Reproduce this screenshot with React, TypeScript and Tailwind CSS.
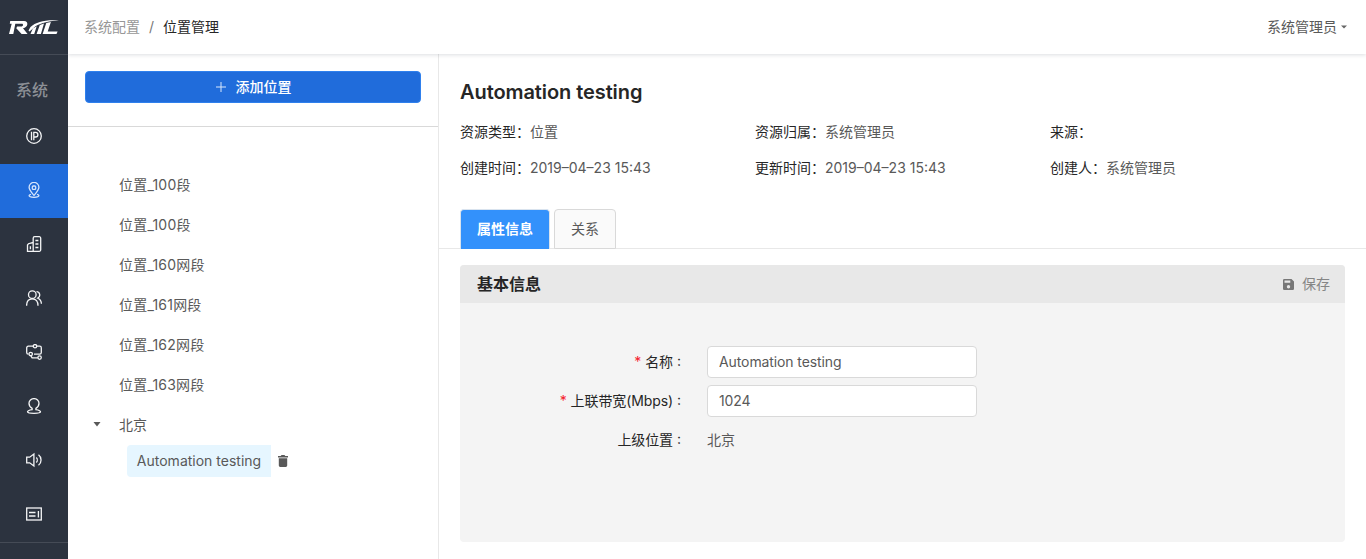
import React from "react";

const navIcons: { id: string; art: React.ReactNode }[] = [
  {
    id: "ip",
    art: (
      <>
        <circle cx="8" cy="8" r="7.3" />
        <path d="M5.500 3.800v8.400M7.800 12.200V4.400h1.800a2.300 2.300 0 0 1 0 4.600H7.800" />
      </>
    ),
  },
  {
    id: "location",
    art: (
      <>
        <path d="M8 13.400C5.600 10.600 3.100 8 3.100 5.300a4.900 4.900 0 0 1 9.800 0C12.900 8 10.400 10.600 8 13.400z" />
        <rect x="6.300" y="4" width="3.400" height="3.400" rx="1" />
        <path d="M5 12.300c-1 .2-1.900.6-1.900 1.300 0 1.300 2.200 1.700 4.900 1.700s4.900-.4 4.900-1.700c0-.7-.9-1.100-1.900-1.300" />
      </>
    ),
  },
  {
    id: "building",
    art: (
      <>
        <path d="M7.200 15.300V2.200A1.500 1.500 0 0 1 8.700.7h4.500a1.500 1.500 0 0 1 1.500 1.500v11.600a1.500 1.500 0 0 1-1.500 1.500H1.500V9l1-1.300 4.700-1.200" />
        <path d="M4.400 10.300v3M9.400 4.500h3M9.400 8h3M9.400 11.500h3" />
      </>
    ),
  },
  {
    id: "group",
    art: (
      <>
        <circle cx="6.300" cy="4.700" r="3.800" />
        <path d="M.6 15.800c0-4.400 2.300-7 5.700-7s5.700 2.600 5.700 7M10.500 1.600c3.600.2 4.400 4.800 1.300 6.500 2.200 1 3.500 3 3.600 5.600" />
      </>
    ),
  },
  {
    id: "topology",
    art: (
      <>
        <path d="M7.200 2.200H2.300A1.600 1.600 0 0 0 .7 3.800v4.800a1.600 1.600 0 0 0 1.600 1.600M10.800 2.200h2.900a1.600 1.600 0 0 1 1.600 1.600v4.800a1.600 1.600 0 0 1-1.600 1.600H8M4.800 11.600l1.300 2.200h5.700" />
        <circle cx="9" cy="2.200" r="1.700" />
        <circle cx="4.700" cy="10" r="1.700" />
        <circle cx="13.600" cy="13.600" r="1.700" />
      </>
    ),
  },
  {
    id: "user",
    art: (
      <path d="M6.100 10.400C4.200 9.200 3 7.200 3 5.200a5 4.600 0 0 1 10 0c0 2-1.200 4-3.100 5.200v1.200c2.800.5 4.600 1.100 4.600 2.200 0 1-1.700 1.500-6.500 1.500s-6.500-.5-6.500-1.500c0-1.100 1.800-1.700 4.600-2.200z" />
    ),
  },
  {
    id: "sound",
    art: (
      <path d="M.7 5.200h3L7.900 2v12l-4.200-3.200h-3zM10.300 5.500c1.300 1.300 1.300 3.700 0 5M12.500 2.700c3.400 2.500 3.400 8.100 0 10.600" />
    ),
  },
  {
    id: "panel",
    art: (
      <>
        <rect x=".7" y="2" width="14.600" height="12" />
        <path d="M3 6.500h6.500M3 10h6.500M12.400 5v6.500" />
      </>
    ),
  },
];

const locations = ["位置_100段", "位置_100段", "位置_160网段", "位置_161网段", "位置_162网段", "位置_163网段"];

function Logo() {
  return (
    <svg width="50" height="18" viewBox="0 0 50 18" fill="#fff">
      <path d="M1.200 3H15c5 0 4.200 6.600-1 7.300l4.600 5.700h-6L7.300 10.300 8.100 8.600h4c2.200 0 2.700-2.800.7-2.800H6.300L4.300 16H0L2.700 5.800H.8z" />
      <path d="M21.500 16l2.300-5.500 3.900-2.300L25.200 16zM27.600 16l3.200-9 4.200-1.500L31.900 16z" />
      <path d="M21.500 9C27 3.600 37 1.400 50 2.400 41 2.900 32 4.600 26.500 8.200L20.500 13.500l-1-1z" />
      <path d="M37.300 4.900l4.600-.8-3.200 9.300h9.900L47.500 16H33.600z" />
    </svg>
  );
}

function Sidebar() {
  return (
    <aside className="flex w-[68px] shrink-0 flex-col bg-[#2c333f]">
      <div className="flex h-[55px] items-center justify-center border-b border-[#454b56]">
        <Logo />
      </div>
      <div className="flex h-[55px] items-center justify-center pt-3.5 pr-1 text-base font-medium text-[#8d9096]">
        系统
      </div>
      <nav className="flex flex-col">
        {navIcons.map(({ id, art }) => (
          <a
            key={id}
            className={`flex h-[54px] items-center justify-center pb-0.5 ${id === "location" ? "bg-[#206cdb] text-[#d5e5fc]" : "text-[#f4f5f6]"}`}
          >
            <svg width="16" height="16" viewBox="0 0 16 16" fill="none" stroke="currentColor" strokeWidth="1.300">
              {art}
            </svg>
          </a>
        ))}
      </nav>
      <div className="border-t border-[#454b56]" />
    </aside>
  );
}

function Info({ label, value }: { label: string; value?: string }) {
  return (
    <div className="flex h-9 w-[295px] items-center whitespace-nowrap">
      <span className="text-[#262626]">{label}：</span>
      <span>{value}</span>
    </div>
  );
}

function Field({ label, required, children }: { label: string; required?: boolean; children: React.ReactNode }) {
  return (
    <div className="flex h-[39px] items-center">
      <div className="flex w-[213px] items-center justify-end tracking-[-0.100px] text-[#262626]">
        {required && <span className="mr-1 text-[#f5222d]">*</span>}
        {label}
      </div>
      <span className="ml-1 w-[30px] pb-0.5 text-[#262626]">:</span>
      {children}
    </div>
  );
}

export default function App() {
  return (
    <div className="flex h-[559px] w-[1366px] overflow-hidden bg-white font-[Inter,'Noto_Sans_CJK_SC',sans-serif] text-sm text-[#595959]">
      <Sidebar />
      <div className="flex min-w-0 flex-1 flex-col">
        <header className="z-10 flex h-[54px] shrink-0 items-center bg-white pr-[19px] pl-4 shadow-[0_1px_4px_rgba(0,21,41,0.140)]">
          <span className="text-[#979797]">系统配置</span>
          <span className="mx-[9px] text-[#777]">/</span>
          <span className="text-[#262626]">位置管理</span>
          <div className="ml-auto flex items-center gap-1">
            系统管理员
            <svg width="6" height="4" viewBox="0 0 6 4" fill="#666">
              <path d="M0 .5h6L3 3.500z" />
            </svg>
          </div>
        </header>
        <div className="flex min-h-0 flex-1">
          <section className="w-[371px] shrink-0 border-r border-[#e8e8e8]">
            <div className="h-[73px] border-b border-[#d9d9d9] pt-[17px] pr-[17px] pl-[17px]">
              <button className="flex h-8 w-full items-center justify-center gap-[9px] rounded border border-[#2f80ed] bg-[#206cdb] font-medium text-white">
                <svg width="12" height="12" viewBox="0 0 12 12" stroke="#d8e7fc">
                  <path d="M6 1v10M1 6h10" />
                </svg>
                添加位置
              </button>
            </div>
            <ul className="pt-[38px]">
              {locations.map((name, i) => (
                <li key={i} className="flex h-10 items-center pl-[51px] tracking-[0.200px]">
                  {name}
                </li>
              ))}
              <li className="flex h-10 items-center pl-[25px]">
                <svg className="mr-[18px]" width="8" height="6" viewBox="0 0 8 6" fill="#595959">
                  <path d="M.5 0h7L4 4.500z" />
                </svg>
                北京
              </li>
              <li className="flex h-8 items-center pl-[59px]">
                <span className="flex h-8 w-36 items-center justify-center rounded-l-sm bg-[#e6f6ff] whitespace-nowrap">
                  Automation testing
                </span>
                <svg className="ml-[7px]" width="10" height="12" viewBox="0 0 10 12" fill="#595959">
                  <path d="M0 1h2.700l.8-1h3l.8 1H10v1.500H0zM.8 3.200h8.400v7.400A1.400 1.400 0 0 1 7.800 12H2.200A1.400 1.400 0 0 1 .8 10.600z" />
                </svg>
              </li>
            </ul>
          </section>
          <main className="flex min-w-0 flex-1 flex-col">
            <h1 className="mt-[22px] ml-[21px] h-[38px] text-xl leading-8 font-semibold tracking-[-0.080px] text-[#262626]">
              Automation testing
            </h1>
            <div className="ml-[21px]">
              <div className="flex">
                <Info label="资源类型" value="位置" />
                <Info label="资源归属" value="系统管理员" />
                <Info label="来源" />
              </div>
              <div className="flex">
                <Info label="创建时间" value="2019–04–23 15:43" />
                <Info label="更新时间" value="2019–04–23 15:43" />
                <Info label="创建人" value="系统管理员" />
              </div>
            </div>
            <div className="mt-[23px] flex h-10 items-end gap-1 border-b border-[#e8e8e8] pl-[21px]">
              <div className="-mb-px flex h-10 w-[90px] items-center justify-center rounded-t border border-b-0 border-[#d9e3ee] bg-[#3391fb] pb-px font-bold text-white">
                属性信息
              </div>
              <div className="-mb-px flex h-10 w-[62px] items-center justify-center rounded-t border border-[#d9d9d9] bg-[#fafafa]">
                关系
              </div>
            </div>
            <div className="mt-4 mr-[21px] ml-[21px] h-[277px] rounded bg-[#f4f4f4]">
              <div className="flex h-[38px] items-center justify-between rounded-t bg-[#e8e8e8] pr-[15px] pl-[17px]">
                <h2 className="text-base font-bold text-[#262626]">基本信息</h2>
                <span className="flex items-center gap-2 text-[#858585]">
                  <svg width="11" height="11" viewBox="0 0 11 11" fill="#777" fillRule="evenodd">
                    <path d="M1.200 0H8.500L11 2.500v7.300A1.200 1.200 0 0 1 9.800 11H1.200A1.200 1.200 0 0 1 0 9.800V1.200A1.200 1.200 0 0 1 1.200 0zM1.500 1.500v2.200h5.800V1.500zM5.500 6a1.700 1.700 0 1 0 0 3.400A1.700 1.700 0 0 0 5.500 6z" />
                  </svg>
                  保存
                </span>
              </div>
              <div className="pt-[39px]">
                <Field label="名称" required>
                  <input
                    defaultValue="Automation testing"
                    className="h-8 w-[270px] rounded border border-[#d9d9d9] bg-white px-[11px] tracking-[-0.100px]"
                  />
                </Field>
                <Field label="上联带宽(Mbps)" required>
                  <input
                    defaultValue="1024"
                    className="h-8 w-[270px] rounded border border-[#d9d9d9] bg-white px-[11px] tracking-[-0.100px]"
                  />
                </Field>
                <Field label="上级位置">北京</Field>
              </div>
            </div>
          </main>
        </div>
      </div>
    </div>
  );
}
